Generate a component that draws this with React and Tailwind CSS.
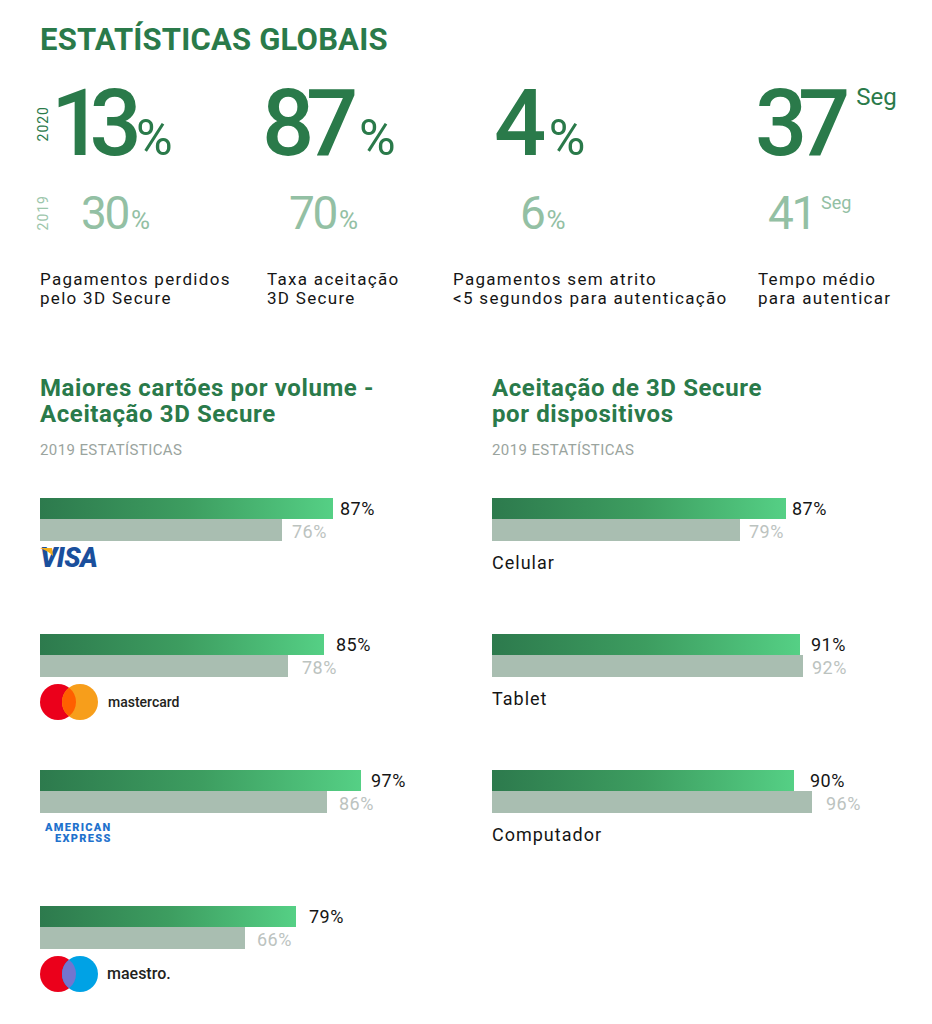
const stats = [
  { big: '13', unit: '%', small: '30', label: ['Pagamentos perdidos', 'pelo 3D Secure'], years: true, bigMl: 'ml-[1px]', bigTrack: 'tracking-[-0.15em]', pctMl: 'ml-[8px]', smallMl: 'ml-[31px]' },
  { big: '87', unit: '%', small: '70', label: ['Taxa aceitação', '3D Secure'], bigMl: '-ml-[5px]', bigTrack: 'tracking-[-0.09em]', pctMl: 'ml-[9px]', smallMl: 'ml-[22px]' },
  { big: '4', unit: '%', small: '6', label: ['Pagamentos sem atrito', '<5 segundos para autenticação'], bigMl: 'ml-[41px]', bigTrack: 'tracking-[-0.06em]', pctMl: 'ml-[8px]', smallMl: 'ml-[67px]' },
  { big: '37', unit: 'Seg', small: '41', label: ['Tempo médio', 'para autenticar'], bigMl: '-ml-[3px]', bigTrack: 'tracking-[-0.1em]', pctMl: 'ml-[15px]', smallMl: 'ml-[10px]' },
];

const cards = [
  { logo: 'visa', now: 293, nowGap: 7, nowLabel: '87%', prev: 242, prevGap: 10, prevLabel: '76%' },
  { logo: 'mastercard', now: 284, nowGap: 12, nowLabel: '85%', prev: 248, prevGap: 14, prevLabel: '78%' },
  { logo: 'amex', now: 321, nowGap: 10, nowLabel: '97%', prev: 287, prevGap: 12, prevLabel: '86%' },
  { logo: 'maestro', now: 256, nowGap: 13, nowLabel: '79%', prev: 205, prevGap: 12, prevLabel: '66%' },
];

const devices = [
  { name: 'Celular', now: 294, nowGap: 6, nowLabel: '87%', prev: 248, prevGap: 9, prevLabel: '79%' },
  { name: 'Tablet', now: 308, nowGap: 11, nowLabel: '91%', prev: 311, prevGap: 9, prevLabel: '92%' },
  { name: 'Computador', now: 302, nowGap: 16, nowLabel: '90%', prev: 320, prevGap: 14, prevLabel: '96%' },
];

const YearTag = ({ children, light }) => (
  <span
    className={`-ml-[4px] w-[14px] rotate-180 text-[14px] leading-[14px] tracking-[1px] [writing-mode:vertical-rl] ${
      light ? 'text-[#9cc6ab]' : 'text-[#2a7a4a]'
    }`}
  >
    {children}
  </span>
);

const StatColumn = ({ stat }) => (
  <div>
    {/* 2020 */}
    <div className="flex h-[92px] items-center">
      {stat.years && <YearTag>2020</YearTag>}
      <div className={`flex items-start ${stat.bigMl}`}>
        <div className="flex items-baseline">
          <span className={`text-[92px] font-medium leading-none text-[#2a7a4a] ${stat.bigTrack}`}>{stat.big}</span>
          {stat.unit === '%' && <span className={`text-[50px] leading-none text-[#2a7a4a] ${stat.pctMl}`}>%</span>}
        </div>
        {stat.unit === 'Seg' && <span className={`mt-[7px] text-[24px] leading-none text-[#2a7a4a] ${stat.pctMl}`}>Seg</span>}
      </div>
    </div>

    {/* 2019 */}
    <div className="mt-[20px] flex h-[46px] items-center">
      {stat.years && <YearTag light>2019</YearTag>}
      <div className={`flex items-start ${stat.smallMl}`}>
        <div className="flex items-baseline">
          <span className="text-[46px] leading-none tracking-[-0.05em] text-[#93c0a4]">{stat.small}</span>
          {stat.unit === '%' && <span className="ml-[3px] text-[26px] leading-none text-[#93c0a4]">%</span>}
        </div>
        {stat.unit === 'Seg' && <span className="ml-[6px] mt-[4px] text-[18px] leading-none text-[#93c0a4]">Seg</span>}
      </div>
    </div>

    <p className="mt-[34px] whitespace-nowrap text-[17px] leading-[19px] tracking-[1.3px] text-[#151515]">
      {stat.label[0]}
      <br />
      {stat.label[1]}
    </p>
  </div>
);

const Bars = ({ row }) => (
  <div>
    <div className="flex h-[21px] items-start">
      <div className="h-full bg-linear-to-r from-[#2d7a4d] via-[#3d9d60] to-[#55d085]" style={{ width: row.now }} />
      <span className="text-[18px] leading-[21px] tracking-[0.5px] text-[#151515]" style={{ marginLeft: row.nowGap }}>
        {row.nowLabel}
      </span>
    </div>
    <div className="flex h-[22px] items-start">
      <div className="h-full bg-[#a9beb1]" style={{ width: row.prev }} />
      <span className="text-[18px] leading-[26px] tracking-[0.5px] text-[#bcc3bf]" style={{ marginLeft: row.prevGap }}>
        {row.prevLabel}
      </span>
    </div>
  </div>
);

const TwoCircles = ({ left, right, mid }) => (
  <svg width="58" height="36" viewBox="0 0 58 36">
    <circle cx="18" cy="18" r="18" fill={left} />
    <circle cx="40" cy="18" r="18" fill={right} />
    <path d="M29 3.75 A18 18 0 0 1 29 32.25 A18 18 0 0 1 29 3.75 Z" fill={mid} />
  </svg>
);

const Logo = ({ type }) => {
  if (type === 'visa') {
    return (
      <div className="relative mt-[5px] h-[24px] w-[64px]">
        <svg className="absolute left-0 top-[2px]" width="14" height="9" viewBox="0 0 14 9">
          <path d="M0 0 H12 L13 8 C9 4 5 2 0 0 Z" fill="#f2ae1c" />
        </svg>
        <span className="block text-[27px] font-black italic leading-[24px] tracking-[-0.5px] text-[#1a4f9c]">VISA</span>
      </div>
    );
  }
  if (type === 'mastercard') {
    return (
      <div className="mt-[7px] flex items-center">
        <TwoCircles left="#eb001b" right="#f79e1b" mid="#ff5f00" />
        <span className="ml-[10px] text-[14px] font-medium leading-none text-[#231f20]">mastercard</span>
      </div>
    );
  }
  if (type === 'amex') {
    return (
      <div className="ml-[5px] mt-[9px] inline-flex flex-col items-end text-[11px] font-black leading-[11px] tracking-[1.3px] text-[#1f72cd]">
        <span>AMERICAN</span>
        <span>EXPRESS</span>
      </div>
    );
  }
  return (
    <div className="mt-[7px] flex items-center">
      <TwoCircles left="#eb001b" right="#00a2e5" mid="#7375cf" />
      <span className="ml-[9px] text-[16px] font-medium leading-none text-[#231f20]">maestro.</span>
    </div>
  );
};

const SectionHead = ({ lines }) => (
  <div>
    <h2 className="whitespace-nowrap text-[24px] font-bold leading-[26px] tracking-[0.6px] text-[#2a7a4a]">
      {lines[0]}
      <br />
      {lines[1]}
    </h2>
    <p className="mt-[14px] text-[15px] leading-[18px] tracking-[0.4px] text-[#9aa49e]">2019 ESTATÍSTICAS</p>
  </div>
);

export default function App() {
  return (
    <div className="min-h-screen bg-white pb-[20px] pl-[40px] pt-[24px] font-['Roboto',sans-serif]">
      <h1 className="text-[31px] font-bold leading-none tracking-[0.2px] text-[#2a7a4a]">ESTATÍSTICAS GLOBAIS</h1>

      <div className="mt-[23px] grid grid-cols-[227px_186px_305px_1fr]">
        {stats.map((s) => (
          <StatColumn key={s.big} stat={s} />
        ))}
      </div>

      <div className="mt-[67px] grid grid-cols-[452px_1fr]">
        <div>
          <SectionHead lines={['Maiores cartões por volume -', 'Aceitação 3D Secure']} />
          <div className="mt-[39px]">
            {cards.map((c) => (
              <div key={c.logo} className="h-[136px]">
                <Bars row={c} />
                <Logo type={c.logo} />
              </div>
            ))}
          </div>
        </div>
        <div>
          <SectionHead lines={['Aceitação de 3D Secure', 'por dispositivos']} />
          <div className="mt-[39px]">
            {devices.map((d) => (
              <div key={d.name} className="h-[136px]">
                <Bars row={d} />
                <p className="mt-[13px] text-[18px] leading-none tracking-[1px] text-[#151515]">{d.name}</p>
              </div>
            ))}
          </div>
        </div>
      </div>
    </div>
  );
}
